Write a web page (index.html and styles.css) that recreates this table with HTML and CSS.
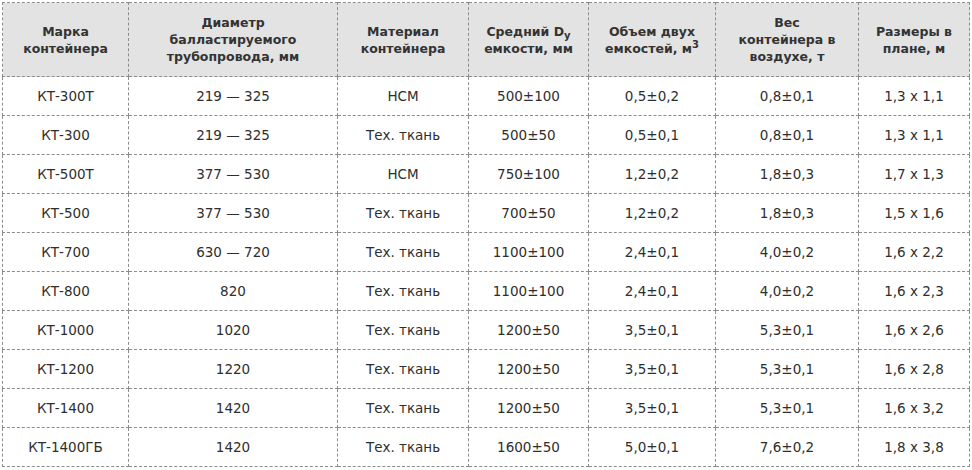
FILE: index.html
```html
<!DOCTYPE html>
<html lang="ru">
<head>
<meta charset="utf-8">
<title>Контейнеры</title>
<link rel="stylesheet" href="styles.css">
</head>
<body>
<table class="spec">
<colgroup>
<col class="c1"><col class="c2"><col class="c3"><col class="c4"><col class="c5"><col class="c6"><col class="c7">
</colgroup>
<thead>
<tr>
<th>Марка<br>контейнера</th>
<th>Диаметр<br>балластируемого<br>трубопровода, мм</th>
<th>Материал<br>контейнера</th>
<th>Средний D<sub>y</sub><br>емкости, мм</th>
<th>Объем двух<br>емкостей, м<sup>3</sup></th>
<th>Вес<br>контейнера в<br>воздухе, т</th>
<th>Размеры в<br>плане, м</th>
</tr>
</thead>
<tbody>
<tr><td>КТ-300Т</td><td>219 — 325</td><td>НСМ</td><td>500±100</td><td>0,5±0,2</td><td>0,8±0,1</td><td>1,3 x 1,1</td></tr>
<tr><td>КТ-300</td><td>219 — 325</td><td>Тех. ткань</td><td>500±50</td><td>0,5±0,1</td><td>0,8±0,1</td><td>1,3 x 1,1</td></tr>
<tr><td>КТ-500Т</td><td>377 — 530</td><td>НСМ</td><td>750±100</td><td>1,2±0,2</td><td>1,8±0,3</td><td>1,7 x 1,3</td></tr>
<tr><td>КТ-500</td><td>377 — 530</td><td>Тех. ткань</td><td>700±50</td><td>1,2±0,2</td><td>1,8±0,3</td><td>1,5 x 1,6</td></tr>
<tr><td>КТ-700</td><td>630 — 720</td><td>Тех. ткань</td><td>1100±100</td><td>2,4±0,1</td><td>4,0±0,2</td><td>1,6 x 2,2</td></tr>
<tr><td>КТ-800</td><td>820</td><td>Тех. ткань</td><td>1100±100</td><td>2,4±0,1</td><td>4,0±0,2</td><td>1,6 x 2,3</td></tr>
<tr><td>КТ-1000</td><td>1020</td><td>Тех. ткань</td><td>1200±50</td><td>3,5±0,1</td><td>5,3±0,1</td><td>1,6 x 2,6</td></tr>
<tr><td>КТ-1200</td><td>1220</td><td>Тех. ткань</td><td>1200±50</td><td>3,5±0,1</td><td>5,3±0,1</td><td>1,6 x 2,8</td></tr>
<tr><td>КТ-1400</td><td>1420</td><td>Тех. ткань</td><td>1200±50</td><td>3,5±0,1</td><td>5,3±0,1</td><td>1,6 x 3,2</td></tr>
<tr><td>КТ-1400ГБ</td><td>1420</td><td>Тех. ткань</td><td>1600±50</td><td>5,0±0,1</td><td>7,6±0,2</td><td>1,8 x 3,8</td></tr>
</tbody>
</table>
</body>
</html>
```
FILE: styles.css
```css
html, body {
  margin: 0;
  padding: 0;
  background: #ffffff;
}
body {
  padding: 2px 0 0 2px;
  font-family: "DejaVu Sans", Verdana, sans-serif;
  color: #2e2e2e;
}
.spec {
  border-collapse: collapse;
  table-layout: fixed;
  width: 967px;
  font-size: 13.5px;
}
.c1 { width: 126px; }
.c2 { width: 209px; }
.c3 { width: 131px; }
.c4 { width: 120px; }
.c5 { width: 127px; }
.c6 { width: 143px; }
.c7 { width: 111px; }
.spec th, .spec td {
  border: 1px dashed #8c8c8c;
  text-align: center;
  vertical-align: middle;
  padding: 0 4px;
}
.spec th {
  background: #e3e3e3;
  font-weight: bold;
  font-size: 12.5px;
  height: 73px;
  line-height: 17px;
  color: #333333;
}
.spec td {
  height: 38px;
}
.spec sub, .spec sup {
  font-size: 10px;
  line-height: 0;
}
.spec sub { vertical-align: -3px; }
.spec sup { vertical-align: 5px; }
```
